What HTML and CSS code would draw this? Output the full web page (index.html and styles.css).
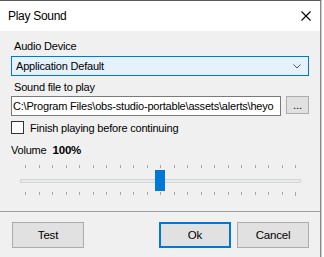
FILE: index.html
```html
<!DOCTYPE html>
<html lang="en">

<head>
    <meta charset="UTF-8">
    <title>Play Sound</title>
    <link rel="stylesheet" href="styles.css">
</head>

<body>
    <div class="window">
        <div class="titlebar">
            <span class="title">Play Sound</span>
            <svg class="close" width="10" height="10" viewBox="0 0 10 10">
                <path d="M0.5 0.5 L9.5 9.5 M9.5 0.5 L0.5 9.5" stroke="#000" stroke-width="1.1" fill="none" />
            </svg>
        </div>

        <div class="content">
            <div class="label">Audio Device</div>
            <div class="combo">
                <span>Application Default</span>
                <svg class="chevron" width="8" height="5" viewBox="0 0 8 5">
                    <path d="M0.5 0.5 L4 4 L7.5 0.5" stroke="#555" stroke-width="1" fill="none" />
                </svg>
            </div>

            <div class="label second">Sound file to play</div>
            <div class="file-row">
                <div class="textbox">C:\Program Files\obs-studio-portable\assets\alerts\heyo</div>
                <div class="btn browse">...</div>
            </div>

            <div class="check-row">
                <span class="checkbox"></span>
                <span>Finish playing before continuing</span>
            </div>

            <div class="volume-row">
                <span>Volume</span>
                <b>100%</b>
            </div>

            <div class="slider">
                <div class="ticks top"></div>
                <div class="track"></div>
                <div class="ticks bottom"></div>
                <div class="thumb" style="left: 135px"></div>
            </div>
        </div>

        <div class="separator"></div>

        <div class="buttons">
            <div class="btn">Test</div>
            <div class="spacer"></div>
            <div class="btn default">Ok</div>
            <div class="btn">Cancel</div>
        </div>
    </div>

    <script>
        // 21 tick marks, top and bottom
        document.querySelectorAll(".ticks").forEach(function (row) {
            for (let i = 0; i < 21; i++) {
                const t = document.createElement("span");
                t.className = "tick";
                row.appendChild(t);
            }
        });
    </script>
</body>

</html>
```

FILE: styles.css
```css
body {
    margin: 0;
    background: #ffffff;
    font-family: "Liberation Sans", Arial, sans-serif;
    font-size: 11px;
    letter-spacing: -0.2px;
    color: #000;
}

.window {
    width: 320px;
    height: 256px;
    border-top: 1px solid #5a5a5a;
    border-right: 1px solid #8a8a8a;
    box-shadow: 1px 0 0 #c8c8c8;
    background: #f0f0f0;
    display: flex;
    flex-direction: column;
}

.titlebar {
    height: 30px;
    background: #fff;
    display: flex;
    align-items: center;
    padding: 0 9px 0 8px;
}

.title {
    flex: 1;
    font-size: 12px;
    letter-spacing: -0.3px;
}

.content {
    padding: 8px 11px 0 11px;
}

.label {
    padding-left: 3px;
    height: 15px;
    line-height: 15px;
}

.label.second {
    margin-top: 4px;
}

.combo {
    margin-top: 2px;
    height: 18px;
    border: 1px solid #0078d7;
    background: #e5f1fb;
    display: flex;
    align-items: center;
    padding: 0 7px 0 4px;
}

.combo span {
    flex: 1;
}

.file-row {
    margin-top: 1px;
    display: flex;
    gap: 5px;
}

.textbox {
    width: 266px;
    height: 18px;
    line-height: 18px;
    border: 1px solid #7a7a7a;
    background: #fff;
    padding: 0 1px 0 1px;
    white-space: nowrap;
    overflow: hidden;
}

.btn {
    background: #e1e1e1;
    border: 1px solid #adadad;
    display: flex;
    align-items: center;
    justify-content: center;
    width: 70px;
    height: 24px;
    font-size: 11.5px;
}

.btn.browse {
    width: 21px;
    height: 16px;
}

.check-row {
    margin-top: 5px;
    display: flex;
    align-items: center;
    gap: 6px;
    height: 13px;
}

.checkbox {
    width: 11px;
    height: 11px;
    border: 1px solid #333;
    background: #fff;
}

.volume-row {
    margin-top: 9px;
    height: 15px;
    line-height: 15px;
    display: flex;
    gap: 6px;
}

.volume-row b {
    font-size: 11.5px;
}

.slider {
    position: relative;
    margin: 7px 0 0 9px;
    width: 281px;
}

.ticks {
    display: flex;
    justify-content: space-between;
    align-items: flex-start;
    padding: 0 5px;
    height: 3px;
}

.tick {
    width: 1px;
    height: 3px;
    background: #a8a8a8;
}

.ticks.bottom {
    margin-top: 9px;
    height: 4px;
}

.ticks.bottom .tick:last-child {
    height: 4px;
}

.track {
    margin-top: 11px;
    height: 2px;
    border: 1px solid #d6d6d6;
    background: #e7eaea;
}

.thumb {
    position: absolute;
    top: 5px;
    width: 10px;
    height: 21px;
    background: #0078d7;
}

.separator {
    margin-top: 15px;
    height: 1px;
    background: #a0a0a0;
}

.buttons {
    margin-top: 10px;
    display: flex;
    gap: 6px;
    padding: 0 11px 0 12px;
}

.spacer {
    flex: 1;
}

.btn.default {
    border: 2px solid #0078d7;
    width: 68px;
    height: 22px;
}
```
